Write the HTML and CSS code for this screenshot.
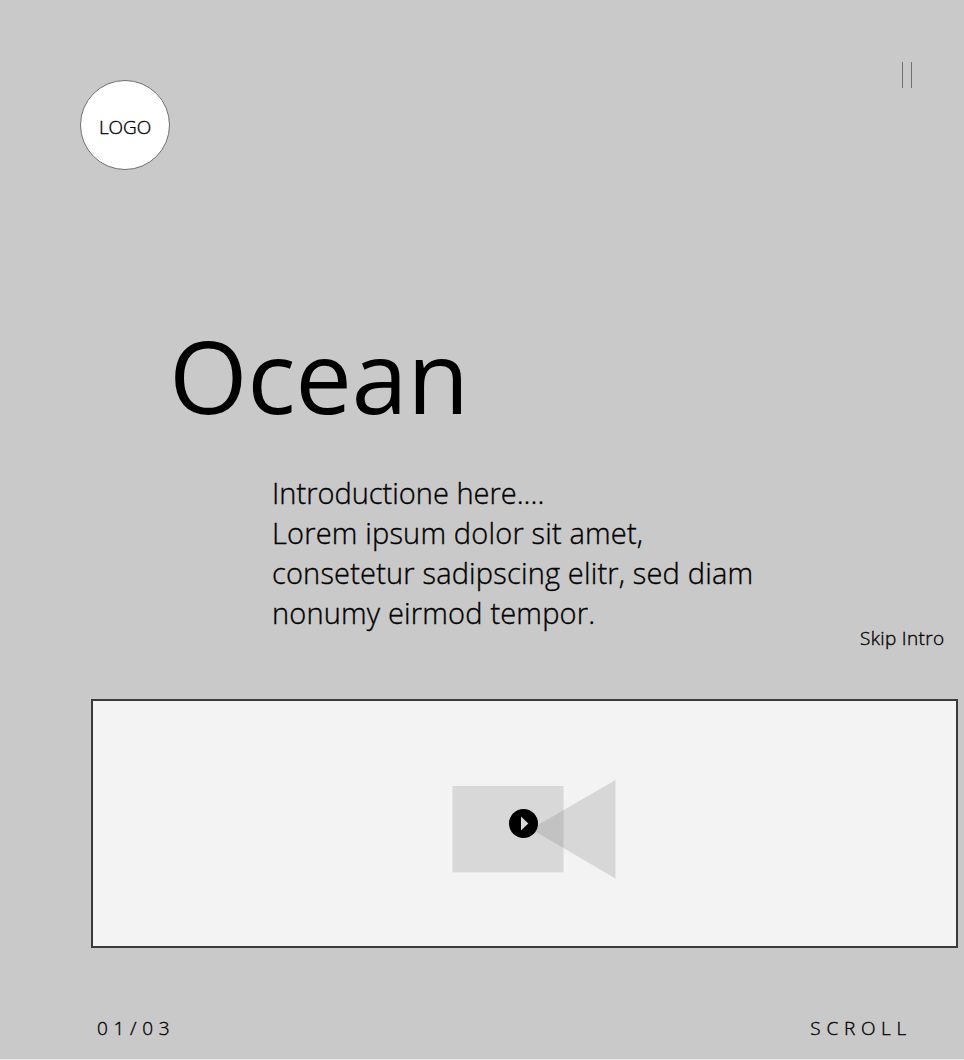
FILE: index.html
```html
<!DOCTYPE html>
<html lang="en">
<head>
<meta charset="utf-8">
<title>Ocean</title>
<link rel="stylesheet" href="styles.css">
</head>
<body>
<div class="page">
  <header class="header">
    <div class="logo">LOGO</div>
    <div class="menu"></div>
  </header>
  <main>
    <h1 class="title">Ocean</h1>
    <div class="intro">
      <p class="tight">Introductione here....</p>
      <p>Lorem ipsum dolor sit amet,</p>
      <p>consetetur sadipscing elitr, sed diam</p>
      <p>nonumy eirmod tempor.</p>
    </div>
    <a class="skip">Skip Intro</a>
    <section class="video">
      <svg class="camera" width="164" height="100" viewBox="452 780 164 100">
        <rect x="452.500" y="786" width="111" height="86.300" fill="#d8d8d8"/>
        <path d="M531 829L615.500 780V878.500Z" fill="#787878" fill-opacity=".22"/>
        <circle cx="523.500" cy="823.500" r="14.500"/>
        <path d="M521 816.500L528.300 823.500L521 830.500Z" fill="#d8d8d8"/>
      </svg>
    </section>
  </main>
  <footer class="footer"><span class="count">01/03</span><span class="scroll">SCROLL</span></footer>
</div>
</body>
</html>
```
FILE: styles.css
```css
* { box-sizing: border-box; }
body { margin: 0; background: #e6e6e6; }
.page { height: 1059px; background: #c9c9c9; overflow: hidden; font-family: "Segoe UI", "Open Sans", sans-serif; font-weight: 300; -webkit-text-stroke: .35px #000; color: #000; }
.header { height: 170px; padding: 62px 52px 0 80px; display: flex; justify-content: space-between; }
.logo { width: 90px; height: 90px; margin-top: 18px; padding-top: 3px; border: 1px solid #707070; border-radius: 50%; background: #fff; display: flex; align-items: center; justify-content: center; font-size: 19px; letter-spacing: -.1px; }
.menu { width: 10px; height: 26px; border: solid #707070; border-width: 0 1px; }
.title { margin: 135px 0 0 169px; height: 140px; line-height: 140px; font-size: 101px; font-weight: 400; letter-spacing: -.4px; -webkit-text-stroke: 0; }
.intro { margin: 28px 0 0 272px; height: 160px; }
.intro p { margin: 0; font-size: 29px; line-height: 40px; letter-spacing: .17px; white-space: nowrap; }
.intro .tight { letter-spacing: 0; }
.skip { display: block; width: max-content; margin: -8px 0 0 860px; height: 26px; font-size: 19px; line-height: 26px; letter-spacing: .35px; }
.video { margin: 48px 6px 0 91px; height: 249px; border: 2px solid #3b3b3b; background: #f3f3f3; padding: 79px 0 0 359px; }
.camera { display: block; }
.footer { margin-top: 67px; padding: 0 52px 0 97px; display: flex; justify-content: space-between; font-size: 19px; line-height: 26px; letter-spacing: 5.7px; }
```
